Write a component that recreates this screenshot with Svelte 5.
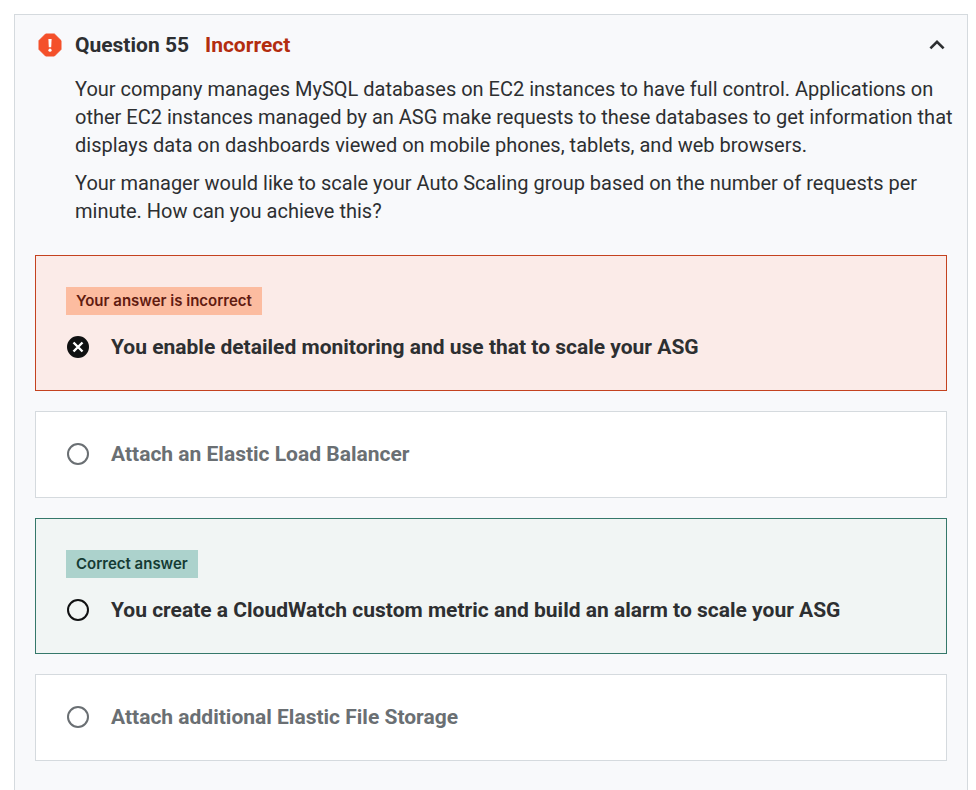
<script>
  const paragraphs = [
    'Your company manages MySQL databases on EC2 instances to have full control. Applications on other EC2 instances managed by an ASG make requests to these databases to get information that displays data on dashboards viewed on mobile phones, tablets, and web browsers.',
    'Your manager would like to scale your Auto Scaling group based on the number of requests per minute. How can you achieve this?'
  ];

  const answers = [
    { text: 'You enable detailed monitoring and use that to scale your ASG', state: 'wrong', tag: 'Your answer is incorrect' },
    { text: 'Attach an Elastic Load Balancer', state: 'plain' },
    { text: 'You create a CloudWatch custom metric and build an alarm to scale your ASG', state: 'right', tag: 'Correct answer' },
    { text: 'Attach additional Elastic File Storage', state: 'plain' }
  ];

  let open = $state(true);
</script>

<main class="panel">
  <header>
    <svg class="alert" viewBox="0 0 24 24" aria-hidden="true">
      <path fill="#f4502a" d="M7.6 1h8.8L23 7.6v8.8L16.4 23H7.6L1 16.4V7.6z" stroke="#f4502a" stroke-width="1" stroke-linejoin="round" />
      <path fill="#fff" d="M10.4 6h3.2l-.4 8.2h-2.4z" />
      <circle cx="12" cy="17.2" r="1.6" fill="#fff" />
    </svg>
    <h1>Question 55</h1>
    <span class="result">Incorrect</span>
    <button type="button" aria-label="Toggle question" aria-expanded={open} onclick={() => (open = !open)}>
      <svg class:closed={!open} viewBox="0 0 20 20" aria-hidden="true">
        <path d="M3.4 13.4L10 6.8l6.6 6.6" fill="none" stroke="#2d2f31" stroke-width="2.6" />
      </svg>
    </button>
  </header>

  {#if open}
    <div class="prompt">
      {#each paragraphs as paragraph}
        <p>{paragraph}</p>
      {/each}
    </div>

    <div class="answers" role="radiogroup" aria-label="Answers">
      {#each answers as answer, i}
        <div class="answer {answer.state}">
          {#if answer.tag}
            <span class="tag">{answer.tag}</span>
          {/if}
          <label for="answer-{i}">
            <span class="mark">
              <input id="answer-{i}" type="radio" name="answer" checked={answer.state === 'wrong'} />
              {#if answer.state === 'wrong'}
                <svg viewBox="0 0 22 22" aria-hidden="true">
                  <path d="M6.5 6.5l9 9M15.5 6.5l-9 9" fill="none" stroke="#fff" stroke-width="2.4" />
                </svg>
              {/if}
            </span>
            <span>{answer.text}</span>
          </label>
        </div>
      {/each}
    </div>
  {/if}
</main>

<style>
  :global(body) {
    background: #fff;
  }

  .panel {
    box-sizing: border-box;
    min-height: calc(100vh - 14px);
    margin: 14px 8px 0 14px;
    padding: 16px 20px 28px;
    border: 1px solid #d5dade;
    border-bottom: 0;
    background: #f8f9fb;
    color: #2d2f31;
    font-family: Roboto, 'Liberation Sans', sans-serif;
    font-size: 20px;
    line-height: 28px;
  }

  header {
    display: flex;
    align-items: center;
    height: 28px;
    padding-left: 3px;
  }

  .alert {
    width: 24px;
    height: 24px;
    margin-right: 13px;
  }

  h1 {
    margin: 0 16px 0 0;
    font-size: 21px;
    font-weight: 700;
  }

  .result {
    color: #b32d0f;
    font-size: 21px;
    font-weight: 700;
  }

  button {
    display: flex;
    margin-left: auto;
    padding: 0;
    border: 0;
    background: none;
    cursor: pointer;
  }

  button svg {
    width: 20px;
    height: 20px;
  }

  .closed {
    transform: rotate(180deg);
  }

  .prompt {
    margin: 16px -10px 30px 40px;
  }

  p {
    margin: 0 0 10px;
  }

  .prompt p:last-child {
    margin-bottom: 0;
  }

  .answers {
    display: flex;
    flex-direction: column;
    gap: 20px;
  }

  .answer {
    display: flex;
    flex-direction: column;
    align-items: flex-start;
    gap: 18px;
    padding: 28px 30px 29px;
    border: 1px solid #d5dade;
    background: #fff;
    color: #6a6f73;
    font-size: 21px;
    font-weight: 700;
  }

  .wrong,
  .right {
    padding-top: 31px;
    color: #2d2f31;
  }

  .wrong {
    border-color: #c4421f;
    background: #fbebe8;
  }

  .right {
    border-color: #35786a;
    background: #f1f5f4;
  }

  .tag {
    padding: 0 10px;
    font-family: Inter, 'Liberation Sans', sans-serif;
    font-size: 15px;
    font-weight: 600;
  }

  .wrong .tag {
    background: #fcbca0;
    color: #611b10;
  }

  .right .tag {
    background: #acd2cc;
    color: #153b34;
  }

  label {
    display: flex;
    gap: 22px;
    align-items: center;
    padding-left: 1px;
  }

  .mark {
    display: grid;
    flex: none;
  }

  .mark > :global(*) {
    grid-area: 1 / 1;
    width: 22px;
    height: 22px;
  }

  input {
    box-sizing: border-box;
    appearance: none;
    margin: 0;
    border: 2px solid #6a6f73;
    border-radius: 50%;
  }

  .right input {
    border-color: #101112;
  }

  .wrong input {
    border-color: #101112;
    background: #101112;
  }
</style>
